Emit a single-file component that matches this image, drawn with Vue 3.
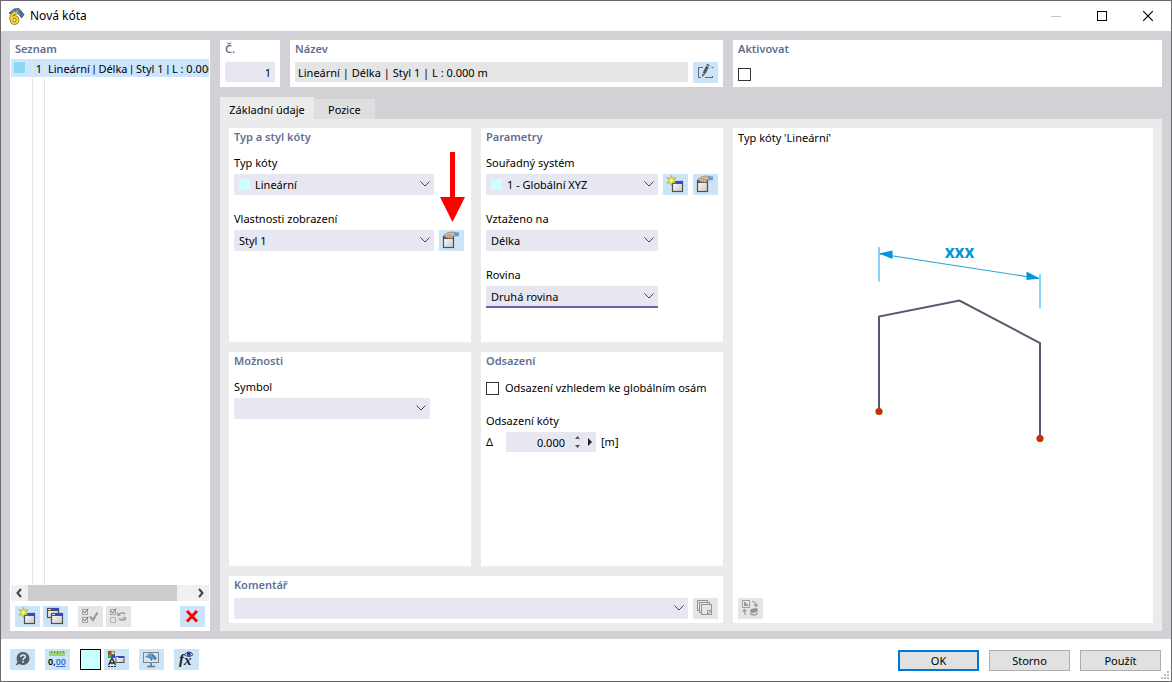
<script setup>
import { ref } from 'vue'

const name = ref('Lineární | Délka | Styl 1 | L : 0.000 m')
const nameParts = ['Lineární ', ' Délka ', ' Styl 1 ', ' L : 0.000 m']
const number = ref('1')
const active = ref(false)
const tab = ref(0)
const tabs = ['Základní údaje', 'Pozice']
const dimType = ref('Lineární')
const style = ref('Styl 1')
const system = ref('1 - Globální XYZ')
const related = ref('Délka')
const plane = ref('Druhá rovina')
const symbol = ref('')
const comment = ref('')
const globalOffset = ref(false)
const offset = ref('0.000')
</script>

<template>
  <div class="window">
    <svg class="defs" width="0" height="0" aria-hidden="true">
      <defs>
        <linearGradient id="pane" x1="0" y1="0" x2="1" y2="1">
          <stop offset="0" stop-color="#ffffff" /><stop offset="1" stop-color="#c9c9c9" />
        </linearGradient>
      </defs>
      <symbol id="i-new" viewBox="0 0 25 21">
        <rect x="9.500" y="7.500" width="10" height="10" fill="url(#pane)" stroke="#505050" stroke-width="1.200" />
        <path d="M9 9.500h11" stroke="#505050" />
        <rect x="12" y="7" width="8" height="2" fill="#3046d8" />
        <path d="M8.500 1.500l1 3.200 3.500-1-2.300 2.700 2.300 2.800-3.300-.9-1.200 3-1.100-3-3.400.9 2.300-2.800-2.300-2.700 3.500 1z" fill="#ffff30" stroke="#9a9a30" stroke-width=".7" />
      </symbol>
      <symbol id="i-dup" viewBox="0 0 25 21">
        <rect x="4.500" y="2.500" width="11" height="9" fill="url(#pane)" stroke="#505050" stroke-width="1.200" />
        <path d="M4 4.500h12" stroke="#505050" />
        <rect x="8" y="2" width="8" height="2" fill="#3046d8" />
        <rect x="8.500" y="7.500" width="11" height="10" fill="url(#pane)" stroke="#505050" stroke-width="1.200" />
        <path d="M8 9.500h12" stroke="#505050" />
        <rect x="12" y="7" width="8" height="2" fill="#3046d8" />
      </symbol>
      <symbol id="i-hand" viewBox="0 0 25 21">
        <rect x="4.500" y="6.500" width="10" height="11" fill="url(#pane)" stroke="#505050" stroke-width="1.200" />
        <path d="M4 8.500h11" stroke="#505050" />
        <rect x="5" y="6" width="5" height="2" fill="#3056d8" />
        <path d="M5 5l4-2.500 5-.5 2 .5v3l-2.500 1-.5 1.500-1.500.5-.5-1-1.500 1-1-1-1.500.5-.5-1.500-1.500-.5z" fill="#d9b896" stroke="#8b7464" stroke-width=".6" />
        <path d="M8 5.500l3-1M9.500 7l3-1.500" stroke="#8b7464" stroke-width=".6" />
        <path d="M15 2l5 .5V6l-4 .5z" fill="#6f9bd0" />
      </symbol>
    </svg>

    <header class="titlebar">
      <svg class="app-icon" width="17" height="17" viewBox="0 0 17 17" aria-hidden="true">
        <path d="M1 5l5-4 5-.5 5 6-2.500 3.500-2-3-4-3-4 2z" fill="#47749c" stroke="#34536e" stroke-width=".8" />
        <path d="M5 2l6 5M8 1l4 6M3 4l9-2" stroke="#91b3cf" stroke-width=".6" />
        <path d="M9.500 4.500C5 4.500 3 7.500 3 11.500" fill="none" stroke="#806b25" stroke-width="3.600" />
        <circle cx="6.500" cy="12" r="3" fill="#fff4bf" stroke="#806b25" stroke-width="3.600" />
        <path d="M9.500 4.500C5 4.500 3 7.500 3 11.500" fill="none" stroke="#f8d030" stroke-width="2.200" />
        <circle cx="6.500" cy="12" r="3" fill="none" stroke="#f8d030" stroke-width="2.200" />
      </svg>
      <h1>Nová kóta</h1>
      <button class="caption" aria-label="Minimalizovat" disabled>
        <svg width="10" height="10" viewBox="0 0 10 10"><path d="M0 5.500h10" stroke="#c4c4c4" /></svg>
      </button>
      <button class="caption" aria-label="Maximalizovat">
        <svg width="10" height="10" viewBox="0 0 10 10"><rect x=".5" y=".5" width="9" height="9" fill="none" stroke="#000" /></svg>
      </button>
      <button class="caption" aria-label="Zavřít">
        <svg width="10" height="10" viewBox="0 0 10 10"><path d="M0 0l10 10M10 0L0 10" stroke="#000" stroke-width="1.200" /></svg>
      </button>
    </header>

    <main class="body">
      <aside class="list">
        <h2>Seznam</h2>
        <ul class="items">
          <li class="item">
            <span class="cell mark"><i class="chip"></i></span>
            <span class="cell num">1</span>
            <span class="text"><template v-for="(part, i) in nameParts" :key="i"><span v-if="i" class="bar">|</span>{{ part }}</template></span>
          </li>
          <li class="rest" aria-hidden="true"><span class="cell mark"></span><span class="cell num"></span></li>
        </ul>
        <div class="scroll">
          <svg width="17" height="16" viewBox="0 0 17 16"><path d="M10 4L6.500 8l3.500 4" fill="none" stroke="#444" stroke-width="2" /></svg>
          <div class="track"><div class="thumb"></div></div>
          <svg width="17" height="16" viewBox="0 0 17 16"><path d="M7 4l3.500 4L7 12" fill="none" stroke="#444" stroke-width="2" /></svg>
        </div>
        <div class="tools">
          <button class="tool" aria-label="Nový"><svg><use href="#i-new" /></svg></button>
          <button class="tool" aria-label="Kopírovat"><svg><use href="#i-dup" /></svg></button>
          <button class="tool off gap" aria-label="Vybrat vše" disabled>
            <svg viewBox="0 0 25 21" fill="none" stroke="#a5a5a5">
              <rect x="4.500" y="3.500" width="5" height="5" /><rect x="4.500" y="11.500" width="5" height="5" />
              <path d="M5 5l2 2 3-4.500M5 13l2 2 3-4.500" stroke="#777" />
              <path d="M12 10.500l3 3.500 4.500-7.500" stroke="#999" stroke-width="2.200" />
            </svg>
          </button>
          <button class="tool off" aria-label="Obrátit výběr" disabled>
            <svg viewBox="0 0 25 21" fill="none" stroke="#a5a5a5">
              <rect x="4.500" y="3.500" width="5" height="5" /><rect x="4.500" y="11.500" width="5" height="5" stroke="#b5b5b5" />
              <path d="M5 5l2 2 3-4.500" stroke="#777" />
              <path d="M12.500 8.500q4-3 6.500-.5M19.500 12.500q-3 3-6.500 0" stroke-width="1.800" />
              <path d="M11 5.500v4.500h4zM20 15v-4h-4z" fill="#a5a5a5" stroke="none" />
            </svg>
          </button>
          <button class="tool end" aria-label="Smazat">
            <svg viewBox="0 0 25 21"><path d="M7 5l10 10.500M17 5L7 15.500" stroke="#f50505" stroke-width="3" /></svg>
          </button>
        </div>
      </aside>

      <section class="content">
        <div class="top">
          <div class="card number">
            <h2><label for="no">Č.</label></h2>
            <input id="no" v-model="number" class="box right" type="text" />
          </div>
          <div class="card name">
            <h2><label for="name">Název</label></h2>
            <div class="row">
              <input id="name" v-model="name" class="box grey" type="text" readonly />
              <button class="tool" aria-label="Upravit název">
                <svg viewBox="0 0 25 21" fill="none" stroke="#5c6670">
                  <path d="M10 5.500H5.500v10H8M12 15.500h8M18.500 5.500h2M19.500 14v2" />
                  <path d="M11 11.500l3.500-7" stroke="#555" stroke-width="3" /><path d="M9 15l.5-3.500 2.500 1.300z" fill="#555" stroke="none" />
                  <path d="M14.800 3.700l.6-1.200" stroke="#444" stroke-width="3" />
                </svg>
              </button>
            </div>
          </div>
          <div class="card activate">
            <h2><label for="active">Aktivovat</label></h2>
            <input id="active" v-model="active" class="check" type="checkbox" />
          </div>
        </div>

        <nav class="tabs" role="tablist">
          <button v-for="(t, i) in tabs" :key="t" role="tab" :aria-selected="tab === i" :class="['tab', { on: tab === i }]" @click="tab = i">{{ t }}</button>
        </nav>

        <div class="sheet">
          <div class="card kind">
            <h2>Typ a styl kóty</h2>
            <div class="field">
              <label for="type">Typ kóty</label>
              <div class="row">
                <div class="pick w200 chipped">
                  <i class="chip cyan"></i>
                  <select id="type" v-model="dimType"><option>Lineární</option></select>
                  <svg class="chev" viewBox="0 0 10 6"><path d="M.5.5L5 5 9.500.5" /></svg>
                </div>
              </div>
            </div>
            <div class="field">
              <label for="style">Vlastnosti zobrazení</label>
              <div class="row">
                <div class="pick w200">
                  <select id="style" v-model="style"><option>Styl 1</option></select>
                  <svg class="chev" viewBox="0 0 10 6"><path d="M.5.5L5 5 9.500.5" /></svg>
                </div>
                <button class="tool" aria-label="Upravit styl"><svg><use href="#i-hand" /></svg></button>
              </div>
            </div>
            <svg class="pointer" width="26" height="70" viewBox="0 0 26 70" aria-hidden="true"><path d="M10 0h5v45h10L12.500 70 0 45h10z" fill="#f00" /></svg>
          </div>

          <div class="card params">
            <h2>Parametry</h2>
            <div class="field">
              <label for="system">Souřadný systém</label>
              <div class="row">
                <div class="pick w172 chipped">
                  <i class="chip cyan"></i>
                  <select id="system" v-model="system"><option>1 - Globální XYZ</option></select>
                  <svg class="chev" viewBox="0 0 10 6"><path d="M.5.5L5 5 9.500.5" /></svg>
                </div>
                <button class="tool" aria-label="Nový systém"><svg><use href="#i-new" /></svg></button>
                <button class="tool" aria-label="Upravit systém"><svg><use href="#i-hand" /></svg></button>
              </div>
            </div>
            <div class="field">
              <label for="related">Vztaženo na</label>
              <div class="pick w172">
                <select id="related" v-model="related"><option>Délka</option></select>
                <svg class="chev" viewBox="0 0 10 6"><path d="M.5.5L5 5 9.500.5" /></svg>
              </div>
            </div>
            <div class="field">
              <label for="plane">Rovina</label>
              <div class="pick w172 focus">
                <select id="plane" v-model="plane"><option>Druhá rovina</option></select>
                <svg class="chev" viewBox="0 0 10 6"><path d="M.5.5L5 5 9.500.5" /></svg>
              </div>
            </div>
          </div>

          <div class="card options">
            <h2>Možnosti</h2>
            <div class="field">
              <label for="symbol">Symbol</label>
              <div class="pick w196">
                <select id="symbol" v-model="symbol"><option></option></select>
                <svg class="chev" viewBox="0 0 10 6"><path d="M.5.5L5 5 9.500.5" /></svg>
              </div>
            </div>
          </div>

          <div class="card shift">
            <h2>Odsazení</h2>
            <label class="tick"><input v-model="globalOffset" class="check" type="checkbox" />Odsazení vzhledem ke globálním osám</label>
            <div class="field">
              <label for="offset">Odsazení kóty</label>
              <div class="delta">
                <span class="sign">Δ</span>
                <div class="spin">
                  <input id="offset" v-model="offset" class="box right" type="text" />
                  <svg width="22" height="20" viewBox="0 0 22 20"><path d="M1 7l2.500-3L6 7zM1 13l2.500 3L6 13z" fill="#555" /><path d="M14 6l4 4-4 4z" fill="#222" /></svg>
                </div>
                <span>[m]</span>
              </div>
            </div>
          </div>

          <div class="card comment">
            <h2><label for="comment">Komentář</label></h2>
            <div class="row">
              <div class="pick wide">
                <select id="comment" v-model="comment"><option></option></select>
                <svg class="chev" viewBox="0 0 10 6"><path d="M.5.5L5 5 9.500.5" /></svg>
              </div>
              <button class="tool off" aria-label="Komentáře" disabled>
                <svg viewBox="0 0 25 21" fill="#e5e5e5" stroke="#959595">
                  <rect x="4.500" y="2.500" width="10" height="10" /><rect x="6.500" y="4.500" width="10" height="10" /><rect x="8.500" y="6.500" width="10" height="10" />
                  <path d="M14.500 16.500v-4h4" /><path d="M15 16l3-3" />
                </svg>
              </button>
            </div>
          </div>

          <div class="card preview">
            <p>Typ kóty 'Lineární'</p>
            <div class="stage">
              <svg width="170" height="200" viewBox="0 0 170 200" role="img" aria-label="Lineární kóta">
                <path d="M5 5v34.500M166 32v34.500" stroke="#62c4ef" stroke-width="1.500" />
                <path d="M6 12l159 24.500" stroke="#2ba6e0" stroke-width="1.200" />
                <path d="M5 11.500l13.500-3v8.500zM166 36.500l-13.500-7v8.500z" fill="#0096dc" />
                <path d="M5 169V74.500l80.500-16L166 101V196" fill="none" stroke="#5a586c" stroke-width="2" />
                <circle cx="5" cy="169.500" r="3.600" fill="#c83200" /><circle cx="166" cy="196.500" r="3.600" fill="#c83200" />
                <text x="85.500" y="16" text-anchor="middle">xxx</text>
              </svg>
            </div>
            <button class="tool off" aria-label="Přepnout obrázek" disabled>
              <svg viewBox="0 0 25 21" fill="none" stroke="#a0a0a0">
                <rect x="4.500" y="2.500" width="7" height="7" /><path d="M6 4h2v2h2v2H6z" fill="#999" stroke="none" />
                <path d="M14 3.500q4 0 4 4M8 16.500q-2 0-1.500-5" stroke-width="1.200" />
                <path d="M15.500 6.500h5l-2.500 3zM4 13.500l2.500-3 2.500 3z" fill="#999" stroke="none" />
                <path d="M13 11l5-1 2 1-1 3-5 1-2-1z" fill="#929292" stroke="none" /><path d="M12 15l5 1 3-2v2l-3 2-5-1z" fill="#aaa" stroke="none" />
              </svg>
            </button>
          </div>
        </div>
      </section>
    </main>

    <footer class="footer">
      <button class="tool" aria-label="Nápověda">
        <svg viewBox="0 0 25 21">
          <path d="M13 3c4 0 6.500 3 6.500 6.500S17 16 13 16c-1.500 0-2.500-.5-3.500-1L5.500 16.500l2-3.500C5 8 8 3 13 3z" fill="#5b6064" />
          <path d="M10.800 8q0-2 2.200-2 2.300 0 2.300 1.800c0 1.400-2.300 1.400-2.300 3.200M13 12v1.700" fill="none" stroke="#d4e6f5" stroke-width="1.600" />
        </svg>
      </button>
      <button class="tool s10" aria-label="Jednotky">
        <svg viewBox="0 0 25 21">
          <rect x="4" y="2" width="16" height="5" fill="#9bd66f" />
          <path d="M6.500 2v2M9.500 2v2M12.500 2v3M15.500 2v2M18.500 2v2" stroke="#5f9c45" />
          <text x="3" y="16" class="digits">0,<tspan fill="#3b6fd4">00</tspan></text>
          <path d="M11 17.500h9.500" stroke="#3b6fd4" />
        </svg>
      </button>
      <button class="tint s10" aria-label="Barva"></button>
      <button class="tool s3" aria-label="Zobrazení">
        <svg viewBox="0 0 25 21">
          <path d="M4 2h7v7H4z" fill="#555" /><path d="M4.500 2.500h3v3h-3z" fill="#f22" /><path d="M7.500 2.500h3v3h-3z" fill="#fd3" /><path d="M4.500 5.500h3v3h-3z" fill="#2c2" /><path d="M7.500 5.500h3v3h-3z" fill="#24f" />
          <path d="M4.500 16L7.500 10h1L11.500 16M6 14h4" fill="none" stroke="#222" stroke-width="1.300" />
          <path d="M4 17.500h8" stroke="#222" stroke-dasharray="2 1" />
          <rect x="12" y="7.500" width="8" height="6" fill="url(#pane)" stroke="#555" /><path d="M14 7h6v2h-6z" fill="#3046d8" />
        </svg>
      </button>
      <button class="tool s10" aria-label="Náhled">
        <svg viewBox="0 0 25 21">
          <rect x="4.500" y="3.500" width="15" height="10" fill="#d5e7f5" stroke="#7a8791" />
          <path d="M12 14v3M8 17.500h8" stroke="#68747d" stroke-width="1.500" />
          <path d="M6 8l4-3.500h3.500l4.500 4.500-2 2.500-2-2-1.500 2.500-2-3z" fill="#437fae" /><path d="M8 6l6 3M11 5l4 5M7 8l6-3" stroke="#92bad8" stroke-width=".7" />
        </svg>
      </button>
      <button class="tool s10" aria-label="Vzorec">
        <svg viewBox="0 0 25 21">
          <text x="5" y="15" class="fx">f</text><text x="10" y="16" class="fx">x</text>
          <path d="M10.500 5.500q4.500-5 8.500 0-4 4-8.500 0z" fill="#cfe0f7" stroke="#263668" /><circle cx="14.800" cy="5" r="2" fill="#28388a" />
        </svg>
      </button>
      <div class="actions">
        <button class="push primary">OK</button>
        <button class="push">Storno</button>
        <button class="push">Použít</button>
      </div>
      <svg class="grip" width="8" height="8" viewBox="0 0 8 8" aria-hidden="true"><path d="M6 0h2v2H6zM3 3h2v2H3zM6 3h2v2H6zM0 6h2v2H0zM3 6h2v2H3zM6 6h2v2H6z" fill="#bbb" /></svg>
    </footer>
  </div>
</template>

<style>
body { margin: 0; }
</style>

<style scoped>
* { box-sizing: border-box; }
.window {
  position: relative;
  display: flex;
  flex-direction: column;
  min-height: 100vh;
  border: 1px solid #6a6a6c;
  background: #fff;
  color: #000;
  font: 11px/18px "Noto Sans", "Open Sans", sans-serif;
}
.defs { position: absolute; }
button, input, select { font: inherit; color: inherit; margin: 0; padding: 0; border: 0; border-radius: 0; }
svg { display: block; flex: none; }
h1, h2, p, ul { margin: 0; padding: 0; }
h2 { font-size: 11px; line-height: 18px; font-weight: 600; color: #5f7094; }

.titlebar { display: flex; align-items: center; height: 30px; padding-left: 7px; }
.titlebar h1 { flex: 1; margin-left: 5px; font-size: 12px; font-weight: 400; }
.caption { display: grid; place-items: center; width: 46px; height: 30px; background: none; }

.body { flex: 1; display: flex; gap: 10px; padding: 9px 9px 8px; background: #d2d1d6; }
.list { display: flex; flex-direction: column; width: 200px; background: #fff; }
.list h2 { padding-left: 5px; }
.items { flex: 1; display: flex; flex-direction: column; margin: 1px 1px 0; list-style: none; }
.item { display: flex; height: 18px; line-height: 19px; background: #cce6ff; overflow: hidden; white-space: nowrap; }
.rest { flex: 1; display: flex; }
.cell { flex: none; border-right: 1px solid #e6e6e6; }
.mark { width: 22px; padding: 3px; }
.num { width: 12px; padding-right: 2px; text-align: right; }
.text { margin-left: 3px; overflow: hidden; white-space: pre; }
.bar { font-family: Roboto, sans-serif; }
.chip { display: block; width: 11px; height: 11px; background: #8ed6f4; }
.cyan { background: #ccffff; }
.scroll { display: flex; height: 16px; margin: 0 1px; background: #f0f0f0; }
.track { flex: 1; }
.thumb { width: 91%; height: 16px; background: #cdcdcd; }
.tools { display: flex; gap: 3px; padding: 5px 5px 4px; }
.gap { margin-left: 7px; }
.end { margin-left: auto; }
.tool { flex: none; width: 25px; height: 21px; background: #cce4f7; }
.tool svg { width: 25px; height: 21px; }
.off { background: #e5e5e5; }

.content { flex: 1; display: flex; flex-direction: column; min-width: 0; }
.card { position: relative; padding: 0 5px; background: #fff; }
.top { display: grid; grid-template-columns: 60px 433px 1fr; gap: 10px; height: 47px; }
.top .box { margin-top: 4px; }
.top .tool { margin-top: 4px; }
.top .check { margin-top: 10px; }
.row { display: flex; gap: 5px; }
.box { display: block; width: 100%; height: 20px; padding: 0 4px 0 3px; background: #e7e7f1; outline: none; }
.grey { background: #e5e5e5; }
.right { text-align: right; }
.check { appearance: none; display: block; flex: none; width: 13px; height: 13px; border: 1px solid #333; background: #fff; }
.check:checked { background: #0078d7; }

.tabs { display: flex; align-items: flex-end; height: 22px; margin-top: 10px; }
.tab { height: 20px; padding: 2px 14px 0; background: #dedede; }
.tab.on { height: 22px; min-width: 94px; padding: 4px 9px 0; background: #ebebeb; }

.sheet {
  flex: 1;
  display: grid;
  grid-template-columns: 242px 242px 1fr;
  grid-template-rows: 1fr 1fr 47px;
  gap: 10px;
  padding: 9px 9px 8px;
  background: #ebebeb;
}
.comment { grid-column: 1 / 3; grid-row: 3; }
.comment .row { margin-top: 4px; }
.preview { grid-column: 3; grid-row: 1 / 4; display: flex; flex-direction: column; padding-bottom: 4px; }
.preview p { margin-top: 1px; }
.stage { flex: 1; display: flex; justify-content: center; align-items: center; padding: 0 0 62px 31px; }
.stage text { font: 700 17px "Noto Sans", "Open Sans", sans-serif; fill: #0096dc; }

.field { display: flex; flex-direction: column; gap: 2px; margin-top: 15px; }
h2 + .field { margin-top: 8px; }
.pick { position: relative; height: 21px; background: #e7e7f1; }
.pick select { appearance: none; width: 100%; height: 21px; padding: 1px 20px 0 5px; background: none; outline: none; }
.pick .chip { position: absolute; left: 5px; top: 5px; }
.chipped select { padding-left: 21px; }
.chev { position: absolute; right: 4px; top: 7px; width: 10px; height: 6px; fill: none; stroke: #444; stroke-width: 1; pointer-events: none; }
.w200 { width: 200px; }
.w196 { width: 196px; }
.w172 { width: 172px; }
.wide { flex: 1; }
.focus { height: 22px; border-bottom: 2px solid #6464aa; }
.pointer { position: absolute; left: 211px; top: 24px; }
.tick { display: flex; align-items: center; gap: 6px; margin-top: 9px; }
.delta { display: flex; align-items: center; gap: 5px; height: 20px; }
.sign { width: 15px; }
.spin { display: flex; width: 90px; background: #e7e7f1; }
.spin .box { flex: 1; min-width: 0; padding-right: 9px; }

.footer { display: flex; height: 42px; padding: 10px 10px 0 9px; background: #fff; }
.s10 { margin-left: 10px; }
.s3 { margin-left: 3px; }
.tint { width: 21px; height: 21px; background: #ccffff; border: 1px solid #000; }
.digits { font: 600 9px "Noto Sans", sans-serif; }
.fx { font: italic 700 15px "Liberation Serif", serif; fill: #222; }
.actions { display: flex; gap: 10px; margin: 1px 0 0 auto; }
.push { width: 81px; height: 21px; background: #e1e1e1; border: 1px solid #adadad; }
.primary { border: 2px solid #0078d7; }
.grip { position: absolute; right: 2px; bottom: 2px; }
</style>
